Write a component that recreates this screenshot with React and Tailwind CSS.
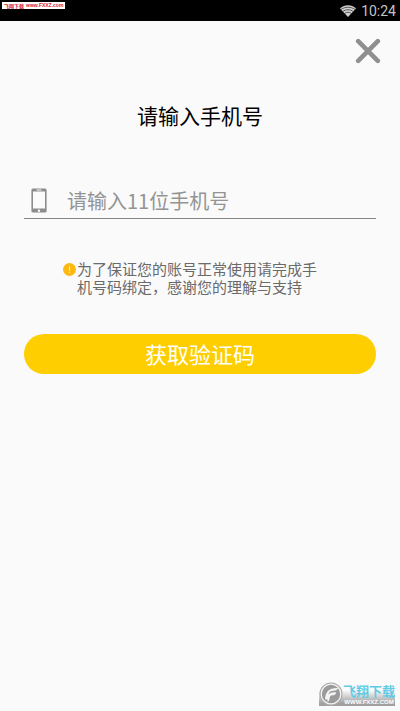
import React, { useState } from "react";

function StatusBar() {
  return (
    <div className="flex h-[21px] items-start justify-between bg-black pr-1">
      <div className="ml-[2px] mt-[2px] flex h-[7px] items-center gap-[2px] bg-white px-[2px] text-[5px] leading-[7px] font-bold text-[#d8232a]">
        <span>飞翔下载</span>
        <span className="font-['Liberation_Sans',sans-serif]">www.FXXZ.com</span>
      </div>
      <div className="flex h-full items-center gap-[5px]">
        <svg width="16" height="12" viewBox="0 0 16 12">
          <path d="M0 3.4C4.6-.9 11.4-.9 16 3.4L8 12z" fill="#d0d0d0" />
          <path
            d="M.8 4.6C5 1.5 11 1.5 15.2 4.6M2.6 6.6C6 4.1 10 4.1 13.4 6.6M4.4 8.6C6.6 6.8 9.4 6.8 11.6 8.6"
            fill="none"
            stroke="#222"
            strokeWidth=".7"
          />
        </svg>
        <span className="font-[Roboto,sans-serif] text-[14px] leading-5 text-[#c4c4c4]">
          10:24
        </span>
      </div>
    </div>
  );
}

function CloseIcon() {
  return (
    <svg width="26" height="26" viewBox="0 0 26 26" aria-hidden="true">
      <path
        d="M3.2 3.2l19.6 19.6M22.8 3.2L3.2 22.8"
        stroke="#8f8f8f"
        strokeWidth="4.6"
        strokeLinecap="round"
      />
    </svg>
  );
}

function PhoneIcon() {
  return (
    <svg width="16" height="25" viewBox="0 0 16 25" aria-hidden="true">
      <path
        fillRule="evenodd"
        fill="#8c8c8c"
        d="M2 .4h12A1.6 1.6 0 0 1 15.6 2v21a1.6 1.6 0 0 1-1.6 1.6H2A1.6 1.6 0 0 1 .4 23V2A1.6 1.6 0 0 1 2 .4zM2 3.4v17.2h12V3.4zM5.6 1.6v.8h4.8v-.8zM8 21.5a1.2 1.2 0 1 0 0 2.4 1.2 1.2 0 0 0 0-2.4z"
      />
    </svg>
  );
}

function NoticeIcon() {
  return (
    <svg
      width="13"
      height="13"
      viewBox="0 0 13 13"
      className="mt-[3px] shrink-0"
      aria-hidden="true"
    >
      <circle cx="6.5" cy="6.5" r="6.5" fill="#fdb913" />
      <path d="M6.5 3.4v4.2" stroke="#fff0c4" strokeWidth="1" />
      <circle cx="6.5" cy="9.3" r=".6" fill="#fff0c4" />
    </svg>
  );
}

function SiteBadge() {
  return (
    <div className="flex items-center bg-linear-to-b from-transparent from-35% to-[#a0a0a0] to-90%">
      <svg width="24" height="24" viewBox="0 0 24 24">
        <circle cx="12" cy="12" r="11.5" fill="#a9a9a9" />
        <circle cx="12" cy="12" r="9.8" fill="#9a9a9a" stroke="#f4f4f4" strokeWidth="1.3" />
        <path
          d="M6 17.8C6.4 10 9.6 5.8 19 6c-.6 2-2 2.7-4.6 2.7-3 .1-4.6 1.5-5 4.1 1.8-2 4-2.6 7.9-2.4-.6 2-1.8 2.8-4 2.8-2.2.1-2.6 1.4-2.9 4.6-.3 1.2-1 1.8-2 2.2.4-2.5.2-3.3-2.4-2.2z"
          fill="#f4f4f4"
        />
      </svg>
      <div className="flex flex-col">
        <span className="text-[13px] leading-[17px] font-bold text-[#62cbe4]">
          飞翔下载
        </span>
        <span className="text-center font-['Liberation_Sans',sans-serif] text-[6px] leading-[7px] font-bold text-white">
          WWW.FXXZ.COM
        </span>
      </div>
    </div>
  );
}

const App = () => {
  const [phone, setPhone] = useState("");

  return (
    <div
      lang="zh-CN"
      className="flex min-h-screen flex-col bg-[#fafafa] font-['Noto_Sans_CJK_SC',sans-serif]"
    >
      <StatusBar />

      <div className="flex justify-end px-[19px] pt-[17px]">
        <button type="button" aria-label="关闭">
          <CloseIcon />
        </button>
      </div>

      <form
        className="flex flex-1 flex-col px-6"
        onSubmit={(e) => e.preventDefault()}
      >
        <h1 className="mt-[35px] text-center text-[21px] leading-8 text-black">
          请输入手机号
        </h1>

        <div className="mt-[52px] flex h-9 items-center gap-5 border-b border-[#858585] pl-[7px]">
          <label htmlFor="phone" aria-label="手机号">
            <PhoneIcon />
          </label>
          <input
            id="phone"
            type="tel"
            maxLength={11}
            value={phone}
            onChange={(e) => setPhone(e.target.value)}
            placeholder="请输入11位手机号"
            className="min-w-0 flex-1 bg-transparent text-[20px] leading-7 text-[#333] outline-none placeholder:text-[#949494]"
          />
        </div>

        {/* Notice */}
        <div className="mx-auto mt-[41px] flex gap-px pr-4">
          <NoticeIcon />
          <p className="w-[244px] text-[15px] leading-[18px] text-[#6a6a6a]">
            为了保证您的账号正常使用请完成手机号码绑定，感谢您的理解与支持
          </p>
        </div>

        <button
          type="submit"
          className="mt-[38px] h-10 rounded-full bg-[#ffce00] pb-[2px] text-[22px] leading-8 text-white"
        >
          获取验证码
        </button>
      </form>

      <div className="flex justify-end px-[5px] pb-[5px]">
        <SiteBadge />
      </div>
    </div>
  );
};

export default App;
